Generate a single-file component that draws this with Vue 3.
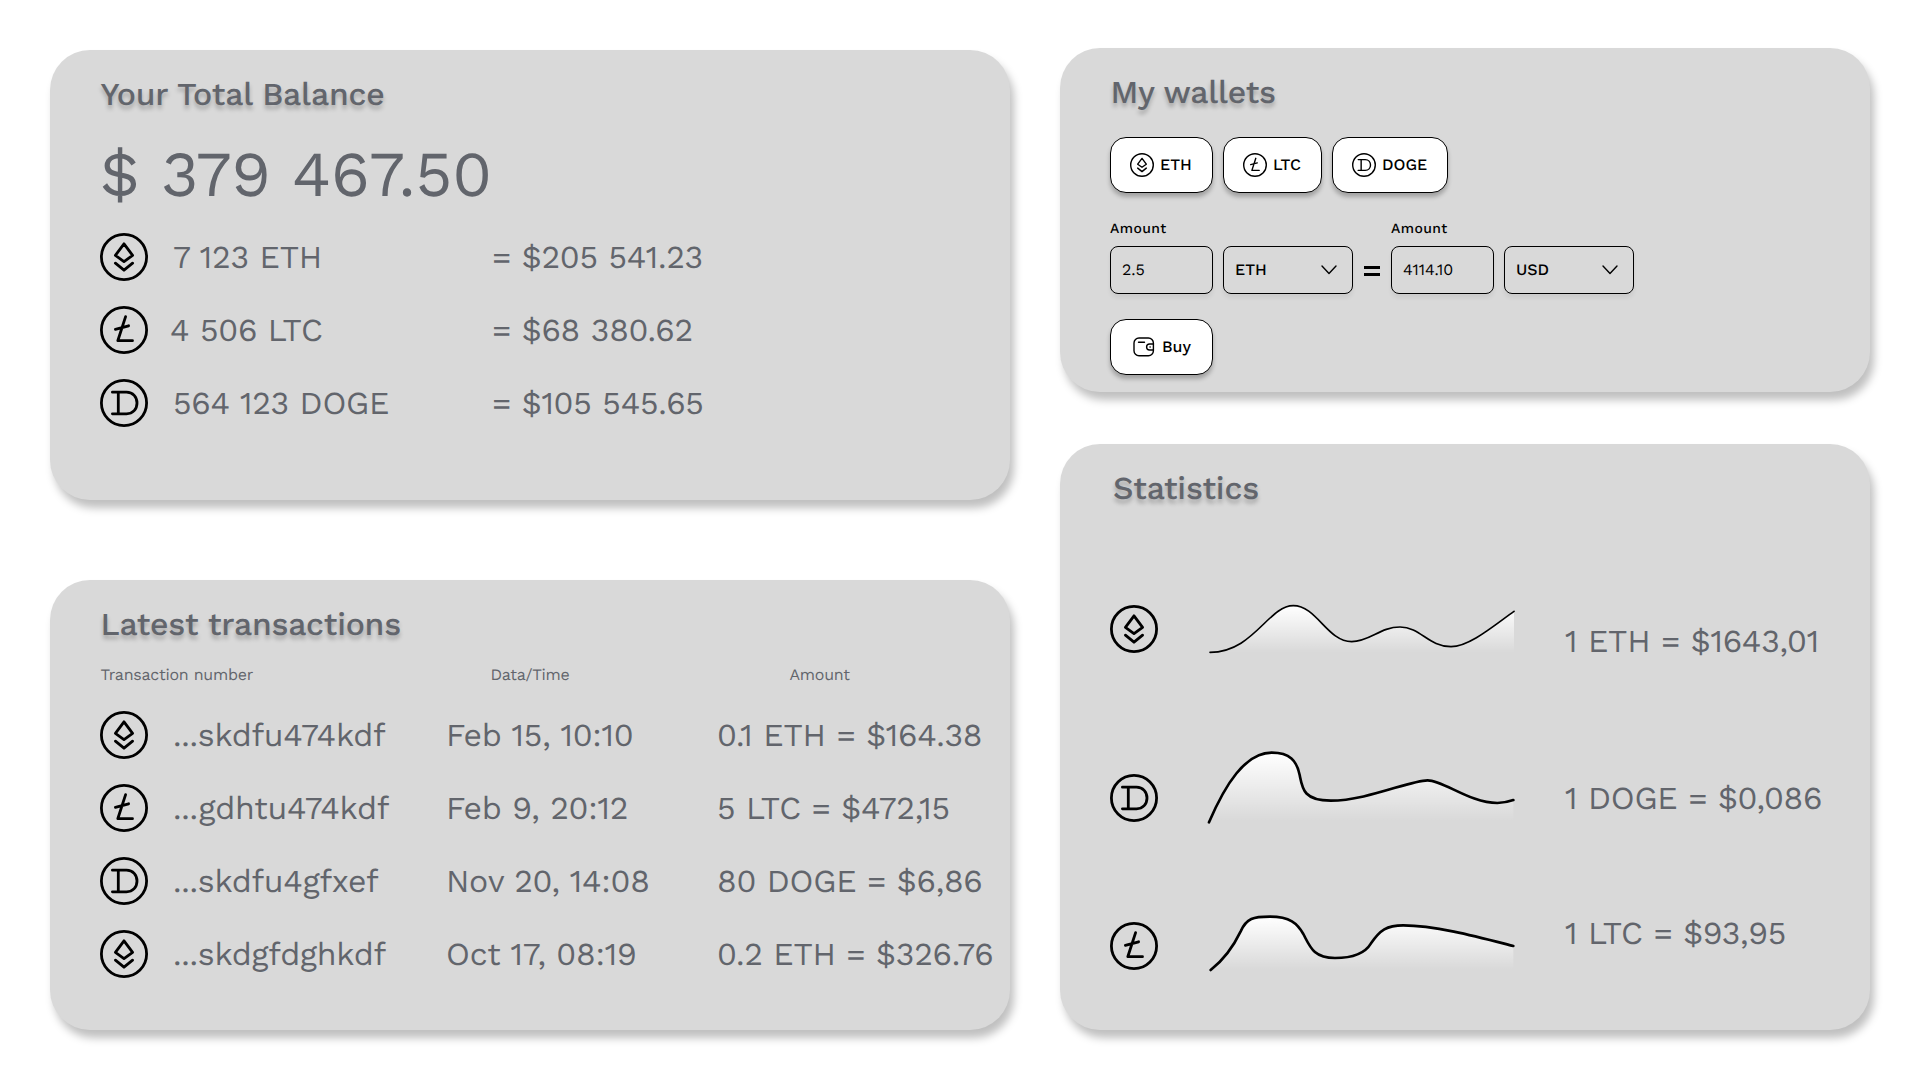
<script setup>
import { h } from 'vue'

const glyphs = {
  eth: 'M24 10.8 32.6 22.4 24 28.6 15.4 22.4ZM15.4 30.2 24 37.2 32.6 30.2',
  ltc: 'M25.6 10.6 17.8 34.7H32.5M15.4 23.3 28.6 19.8',
  doge: 'M12.4 13.2H26.5C33 13.2 37 18 37 24S33 34.8 26.5 34.8H12.4M18.3 13.2V34.8',
}
const CoinIcon = (props) =>
  h('svg', { viewBox: '0 0 48 48', fill: 'none', stroke: '#000', 'stroke-width': 2.8, 'stroke-linecap': 'round', 'stroke-linejoin': 'round' }, [
    h('circle', { cx: 24, cy: 24, r: 22.6 }),
    h('path', { d: glyphs[props.coin] }),
  ])
CoinIcon.props = ['coin']

const balances = [
  { coin: 'eth', amount: '7 123 ETH', usd: '= $205 541.23' },
  { coin: 'ltc', amount: '4 506 LTC', usd: '= $68 380.62' },
  { coin: 'doge', amount: '564 123 DOGE', usd: '= $105 545.65' },
]
const transactions = [
  { coin: 'eth', id: '...skdfu474kdf', date: 'Feb 15, 10:10', sum: '0.1 ETH = $164.38' },
  { coin: 'ltc', id: '...gdhtu474kdf', date: 'Feb 9, 20:12', sum: '5 LTC = $472,15' },
  { coin: 'doge', id: '...skdfu4gfxef', date: 'Nov 20, 14:08', sum: '80 DOGE = $6,86' },
  { coin: 'eth', id: '...skdgfdghkdf', date: 'Oct 17, 08:19', sum: '0.2 ETH = $326.76' },
]
const wallets = [
  { coin: 'eth', name: 'ETH' },
  { coin: 'ltc', name: 'LTC' },
  { coin: 'doge', name: 'DOGE' },
]
const stats = [
  {
    coin: 'eth', rate: '1 ETH = $1643,01', box: '450 510 960 180', height: 60, stroke: 5, top: 527, bottom: 667, start: 480,
    line: 'M480 667C610 667 655 527 730 527C800 527 832 635 905 635C960 635 990 591 1050 591C1112 591 1135 650 1203 650C1260 650 1340 580 1392 544',
  },
  {
    coin: 'doge', rate: '1 DOGE = $0,086', box: '330 48 960 240', height: 80, stroke: 8, top: 68, bottom: 272, start: 357,
    line: 'M357 277C405 165 465 68 545 68C600 68 620 92 629 135C637 175 640 212 722 212C830 212 960 151 1013 151C1060 151 1140 219 1222 219Q1248 218 1270 210',
  },
  {
    coin: 'ltc', rate: '1 LTC = $93,95', box: '330 540 960 195', height: 65, stroke: 8, top: 560, bottom: 718, start: 362,
    line: 'M362 720C400 690 430 650 452 604C470 564 490 560 540 560C600 560 622 580 640 612C660 650 670 684 735 684C800 684 828 665 843 640C870 600 890 586 940 586C1040 586 1180 625 1270 648',
  },
]
</script>

<template>
  <main class="dashboard">
    <div class="column left">
      <section class="card balance">
        <h2>Your Total Balance</h2>
        <p class="total">$ 379 467.50</p>
        <ul class="rows">
          <li v-for="b in balances" :key="b.coin" class="balance-row">
            <CoinIcon class="coin" :coin="b.coin" />
            <span :class="['amount', b.coin]">{{ b.amount }}</span>
            <span>{{ b.usd }}</span>
          </li>
        </ul>
      </section>

      <section class="card latest">
        <h2>Latest transactions</h2>
        <div class="heads">
          <span>Transaction number</span>
          <span>Data/Time</span>
          <span>Amount</span>
        </div>
        <ul class="rows">
          <li v-for="t in transactions" :key="t.id" class="tx-row">
            <CoinIcon class="coin" :coin="t.coin" />
            <span>{{ t.id }}</span>
            <span>{{ t.date }}</span>
            <span>{{ t.sum }}</span>
          </li>
        </ul>
      </section>
    </div>

    <div class="column right">
      <section class="card wallets">
        <h2>My wallets</h2>
        <div class="wallet-list">
          <button v-for="w in wallets" :key="w.coin" :class="['btn', w.coin]">
            <CoinIcon class="coin-sm" :coin="w.coin" />
            <span>{{ w.name }}</span>
          </button>
        </div>
        <div class="exchange">
          <label class="field">
            <span class="caption">Amount</span>
            <span class="box input">2.5</span>
          </label>
          <div class="box select">
            <span>ETH</span>
            <svg class="chevron" viewBox="0 0 16 10"><path d="M1 1 8 8.4 15 1" /></svg>
          </div>
          <div class="equals"><i></i><i></i></div>
          <label class="field">
            <span class="caption">Amount</span>
            <span class="box input">4114.10</span>
          </label>
          <div class="box select">
            <span>USD</span>
            <svg class="chevron" viewBox="0 0 16 10"><path d="M1 1 8 8.4 15 1" /></svg>
          </div>
        </div>
        <button class="btn buy">
          <svg class="wallet-icon" viewBox="0 0 22 20">
            <rect x="1" y="1" width="19.4" height="17.8" rx="5" />
            <path d="M5.5 5.2H11.5M20.4 7H16.6A3 3 0 0 0 16.6 13H20.4M17 10H17.2" />
          </svg>
          <span>Buy</span>
        </button>
      </section>

      <section class="card statistics">
        <h2>Statistics</h2>
        <div v-for="s in stats" :key="s.coin" :class="['stat', s.coin]">
          <CoinIcon class="coin" :coin="s.coin" />
          <svg class="chart" :viewBox="s.box" width="320" :height="s.height">
            <defs>
              <linearGradient :id="'fade-' + s.coin" gradientUnits="userSpaceOnUse" x1="0" :y1="s.top" x2="0" :y2="s.bottom">
                <stop offset="0" stop-color="#fff" />
                <stop offset="1" stop-color="#fff" stop-opacity="0" />
              </linearGradient>
            </defs>
            <path :d="`${s.line}V${s.bottom}H${s.start}Z`" :fill="`url(#fade-${s.coin})`" />
            <path :d="s.line" fill="none" stroke="#000" :stroke-width="s.stroke" stroke-linecap="round" />
          </svg>
          <span class="rate">{{ s.rate }}</span>
        </div>
      </section>
    </div>
  </main>
</template>

<style>
body {
  margin: 0;
  background: #fff;
}
</style>

<style scoped>
.dashboard {
  display: flex;
  gap: 50px;
  width: 1920px;
  height: 1080px;
  padding: 50px;
  box-sizing: border-box;
  overflow: hidden;
  font-family: 'Work Sans', Inter, sans-serif;
  font-size: 32px;
  line-height: 38px;
  letter-spacing: -0.25px;
  text-rendering: geometricPrecision;
  color: #62656c;
  white-space: nowrap;
}
.column {
  display: flex;
  flex-direction: column;
}
.left {
  width: 960px;
  gap: 80px;
}
.right {
  width: 810px;
  gap: 52px;
  margin-top: -2px;
}
.card {
  box-sizing: border-box;
  padding: 25px 0 0 50px;
  border-radius: 40px;
  background: #d9d9d9;
  box-shadow: 4px 8px 8px rgba(0, 0, 0, 0.25);
}
.balance,
.latest {
  height: 450px;
}
.wallets {
  height: 344px;
}
.statistics {
  height: 586px;
}
h2 {
  width: max-content;
  margin: 0;
  padding-left: 0.5px;
  font: inherit;
  font-weight: 500;
  text-shadow: 0 4px 4px rgba(0, 0, 0, 0.25);
}
.statistics h2 {
  padding-left: 3px;
}
.total {
  margin: 22px 0 0;
  font-size: 64px;
  line-height: 78px;
}
.rows {
  display: flex;
  flex-direction: column;
  gap: 25px;
  margin: 0;
  padding: 0;
  list-style: none;
}
.balance .rows {
  margin-top: 20px;
}
.balance-row,
.tx-row {
  display: grid;
  align-items: center;
  height: 48px;
}
.balance-row {
  grid-template-columns: 73px 319px 1fr;
}
.amount.ltc {
  margin-left: -3px;
}
.coin {
  display: block;
  width: 48px;
  height: 48px;
}
.heads {
  display: grid;
  grid-template-columns: 390px 299px 1fr;
  margin: 22px 0 0 0.5px;
  font-size: 16px;
  font-weight: 450;
  line-height: 20px;
}
.latest .rows {
  margin-top: 26px;
}
.tx-row {
  grid-template-columns: 73px 273px 271px 1fr;
}
.btn {
  display: flex;
  align-items: center;
  box-sizing: border-box;
  height: 56px;
  padding: 0 0 0 19px;
  border: 1px solid #000;
  border-radius: 16px;
  background: #fff;
  box-shadow: 0 4px 4px rgba(0, 0, 0, 0.25);
  font-family: inherit;
  font-size: 16px;
  font-weight: 500;
  line-height: 20px;
  letter-spacing: 0;
  text-rendering: inherit;
  color: #000;
}
.btn.eth,
.btn.buy {
  width: 103px;
}
.btn.ltc {
  width: 99px;
}
.btn.doge {
  width: 116px;
}
.wallet-list {
  display: flex;
  gap: 10px;
  margin-top: 26px;
}
.coin-sm {
  width: 24px;
  height: 24px;
  margin-right: 6px;
}
.exchange {
  display: flex;
  align-items: flex-end;
  margin-top: 25px;
  font-size: 16px;
  line-height: 20px;
  letter-spacing: 0;
  color: #000;
}
.field {
  display: flex;
  flex-direction: column;
  margin-right: 10px;
}
.caption {
  height: 20px;
  margin-bottom: 8px;
  font-size: 14px;
  font-weight: 500;
  line-height: 22px;
  letter-spacing: 0.4px;
}
.box {
  display: flex;
  align-items: center;
  box-sizing: border-box;
  height: 48px;
  border: 1px solid #000;
  border-radius: 8px;
  box-shadow: 0 4px 4px rgba(0, 0, 0, 0.06);
}
.input {
  width: 103px;
  padding-left: 11px;
}
.select {
  justify-content: space-between;
  width: 130px;
  padding: 0 15px 0 11px;
  font-weight: 500;
}
.chevron {
  width: 16px;
  height: 10px;
  fill: none;
  stroke: #000;
  stroke-width: 1.4;
  stroke-linecap: round;
  stroke-linejoin: round;
}
.equals {
  display: flex;
  flex-direction: column;
  gap: 4px;
  width: 16px;
  margin: 0 11px 18px;
}
.equals i {
  height: 3px;
  background: #000;
}
.buy {
  margin-top: 25px;
  padding-left: 22px;
}
.wallet-icon {
  width: 22px;
  height: 20px;
  margin-right: 7px;
  fill: none;
  stroke: #000;
  stroke-width: 1.4;
  stroke-linecap: round;
}
.stat {
  display: grid;
  grid-template-columns: 90px 365px 1fr;
  align-items: start;
}
.stat.eth {
  margin-top: 93px;
  height: 146px;
}
.stat.eth .coin {
  margin-top: 5px;
}
.stat.eth .rate {
  margin-top: 22px;
}
.stat.doge {
  height: 164px;
}
.stat.doge .coin {
  margin-top: 28px;
}
.stat.doge .rate {
  margin-top: 33px;
}
.stat.ltc .coin {
  margin-top: 12px;
}
.stat.ltc .rate {
  margin-top: 4px;
}
</style>
